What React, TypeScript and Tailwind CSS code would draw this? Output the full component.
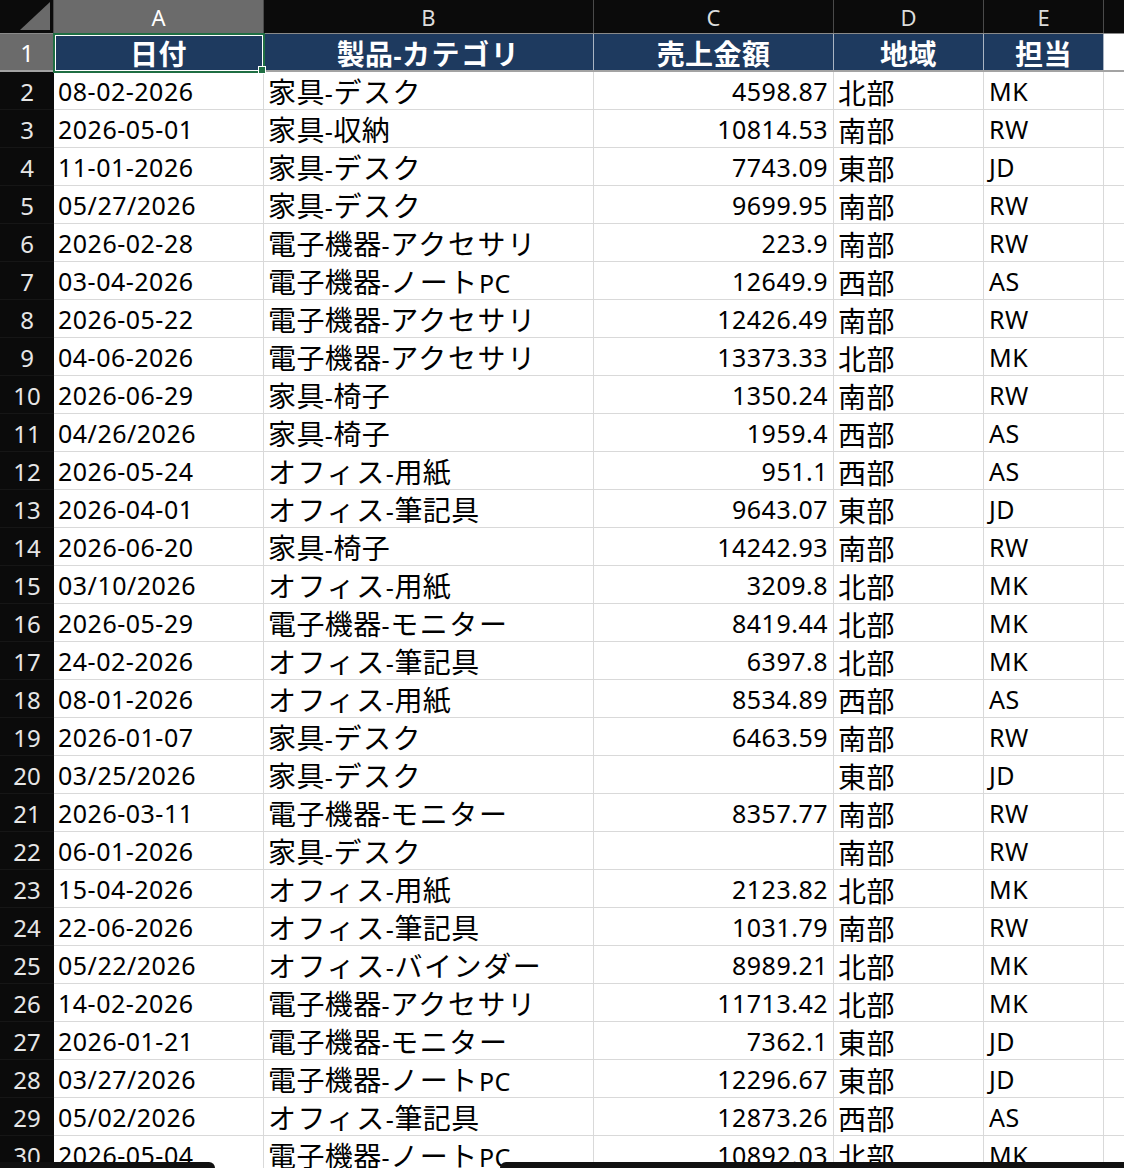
import React from "react";

const rows: string[][] = [
  ["08-02-2026", "家具-デスク", "4598.87", "北部", "MK"],
  ["2026-05-01", "家具-収納", "10814.53", "南部", "RW"],
  ["11-01-2026", "家具-デスク", "7743.09", "東部", "JD"],
  ["05/27/2026", "家具-デスク", "9699.95", "南部", "RW"],
  ["2026-02-28", "電子機器-アクセサリ", "223.9", "南部", "RW"],
  ["03-04-2026", "電子機器-ノートPC", "12649.9", "西部", "AS"],
  ["2026-05-22", "電子機器-アクセサリ", "12426.49", "南部", "RW"],
  ["04-06-2026", "電子機器-アクセサリ", "13373.33", "北部", "MK"],
  ["2026-06-29", "家具-椅子", "1350.24", "南部", "RW"],
  ["04/26/2026", "家具-椅子", "1959.4", "西部", "AS"],
  ["2026-05-24", "オフィス-用紙", "951.1", "西部", "AS"],
  ["2026-04-01", "オフィス-筆記具", "9643.07", "東部", "JD"],
  ["2026-06-20", "家具-椅子", "14242.93", "南部", "RW"],
  ["03/10/2026", "オフィス-用紙", "3209.8", "北部", "MK"],
  ["2026-05-29", "電子機器-モニター", "8419.44", "北部", "MK"],
  ["24-02-2026", "オフィス-筆記具", "6397.8", "北部", "MK"],
  ["08-01-2026", "オフィス-用紙", "8534.89", "西部", "AS"],
  ["2026-01-07", "家具-デスク", "6463.59", "南部", "RW"],
  ["03/25/2026", "家具-デスク", "", "東部", "JD"],
  ["2026-03-11", "電子機器-モニター", "8357.77", "南部", "RW"],
  ["06-01-2026", "家具-デスク", "", "南部", "RW"],
  ["15-04-2026", "オフィス-用紙", "2123.82", "北部", "MK"],
  ["22-06-2026", "オフィス-筆記具", "1031.79", "南部", "RW"],
  ["05/22/2026", "オフィス-バインダー", "8989.21", "北部", "MK"],
  ["14-02-2026", "電子機器-アクセサリ", "11713.42", "北部", "MK"],
  ["2026-01-21", "電子機器-モニター", "7362.1", "東部", "JD"],
  ["03/27/2026", "電子機器-ノートPC", "12296.67", "東部", "JD"],
  ["05/02/2026", "オフィス-筆記具", "12873.26", "西部", "AS"],
  ["2026-05-04", "電子機器-ノートPC", "10892.03", "北部", "MK"],
];

const SPLIT = /([\u3040-\u30ff]+|[\u3000-\u303f\u4e00-\u9fff\uff00-\uffef]+)/;
const KANA = /^[\u3040-\u30ff]+$/;
const KANJI = /^[\u3000-\u303f\u4e00-\u9fff\uff00-\uffef]+$/;

function Txt({ s }: { s: string }) {
  const parts = s.split(SPLIT).filter((p) => p.length > 0);
  return (
    <span className="whitespace-nowrap leading-none">
      {parts.map((p, i) =>
        KANA.test(p) ? (
          <span
            key={i}
            className="text-[28px] tracking-[1.6px] [font-family:'Noto_Sans_CJK_JP',sans-serif]"
          >
            {p}
          </span>
        ) : KANJI.test(p) ? (
          <span
            key={i}
            className="text-[28px] tracking-[0.4px] [font-family:'Noto_Sans_CJK_JP',sans-serif]"
          >
            {p}
          </span>
        ) : (
          <span
            key={i}
            className="text-[25px] tracking-[0.5px] [font-family:'Noto_Sans','Noto_Sans_CJK_JP',sans-serif]"
          >
            {p}
          </span>
        )
      )}
    </span>
  );
}

const widths = ["w-[210px]", "w-[330px]", "w-[240px]", "w-[150px]", "w-[120px]"];
const letters = ["A", "B", "C", "D", "E"];
const headers = ["日付", "製品-カテゴリ", "売上金額", "地域", "担当"];

export default function App() {
  return (
    <div className="relative w-[1124px] h-[1168px] overflow-hidden bg-white text-black leading-none [font-family:'Noto_Sans','Noto_Sans_CJK_JP',sans-serif]">
      {/* column header row */}
      <div className="flex h-[34px] bg-[#0b0b0b] border-b border-[#8a8a8a]">
        <div className="relative w-[54px] shrink-0 border-r border-[#4a4a4a]">
          <svg className="absolute left-0 top-0" width="54" height="33">
            <polygon points="20,30 50,30 50,2" fill="#6a6a6a" />
          </svg>
        </div>
        {letters.map((l, i) => (
          <div
            key={l}
            className={`${widths[i]} shrink-0 flex items-center justify-center border-r border-[#4a4a4a] text-[22px] ${
              i === 0 ? "bg-[#6b6b6b] text-white" : "text-[#dcdcdc]"
            }`}
          >
            {l}
          </div>
        ))}
        <div className="flex-1" />
      </div>

      {/* header row 1 */}
      <div className="flex h-[38px] border-b-2 border-[#a3a3a3]">
        <div className="w-[54px] shrink-0 bg-[#6b6b6b] flex items-center justify-center pt-[1px] text-[24px] text-white">
          1
        </div>
        {headers.map((h, i) => (
          <div
            key={h}
            className={`${widths[i]} shrink-0 bg-[#1e3a5f] flex items-center justify-center pt-[2px] border-r border-[#a9b4c2] text-white font-bold`}
          >
            <Txt s={h} />
          </div>
        ))}
        <div className="flex-1 bg-white" />
      </div>

      {/* data rows */}
      {rows.map((r, ri) => (
        <div key={ri} className="flex h-[38px]">
          <div className="w-[54px] shrink-0 bg-[#0b0b0b] flex items-center justify-center pt-[2px] text-[24px] text-[#e6e6e6] border-b border-[#161616]">
            {ri + 2}
          </div>
          {r.map((c, ci) => (
            <div
              key={ci}
              className={`${widths[ci]} shrink-0 flex items-center pt-[2px] border-r border-b border-[#d9d9d9] ${
                ci === 2 ? "justify-end pr-[5px]" : ci === 4 ? "pl-[5px]" : "pl-[4px]"
              }`}
            >
              <Txt s={c} />
            </div>
          ))}
          <div className="flex-1 border-b border-[#d9d9d9]" />
        </div>
      ))}

      {/* selection on A1 */}
      <div className="absolute left-[53px] top-[33px] w-[212px] h-[40px] border-2 border-[#1f6e43] pointer-events-none">
        <div className="w-full h-full border border-white" />
      </div>
      <div className="absolute left-[258px] top-[66px] w-[8px] h-[8px] bg-[#1f6e43] border border-white" />

      {/* bottom bar */}
      <div className="absolute left-0 bottom-0 w-[215px] h-[6px] bg-[#111111] rounded-tr-[8px]" />
      <div className="absolute left-[500px] right-0 bottom-0 h-[6px] bg-[#111111] rounded-tl-[8px]" />
    </div>
  );
}
